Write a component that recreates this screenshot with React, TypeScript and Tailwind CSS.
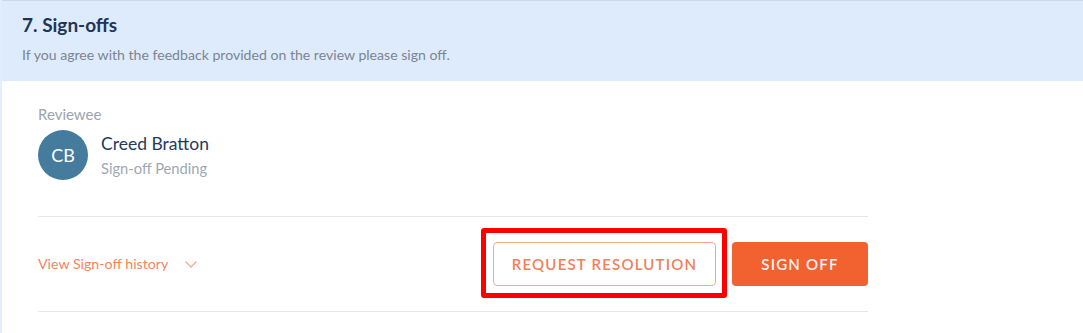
import React from 'react'

const Chevron = () => (
    <svg width="12" height="7" viewBox="0 0 12 7" fill="none" className="ml-[17px] mt-[1px]">
        <path d="M1 1l5 5 5-5" stroke="#f6a88c" strokeWidth="1.2" strokeLinecap="round" strokeLinejoin="round" />
    </svg>
)

const App = () => {
    return (
        <div className="w-[1083px] h-[333px] bg-white font-['Lato',sans-serif] border-l-2 border-[#e3edfb] overflow-hidden">
            <div className="h-[81px] bg-[#deebfc] border-t border-[#c9d9ee] pl-[20px] pt-[12px]">
                <h2 className="text-[19px] leading-[24px] font-bold text-[#1e3558]">7. Sign-offs</h2>
                <p className="mt-[8px] text-[14.1px] leading-[20px] text-[#7b8591]">
                    If you agree with the feedback provided on the review please sign off.
                </p>
            </div>
            <div className="pl-[36px] pt-[23px] w-[866px]">
                <div className="text-[15px] leading-[20px] text-[#9ba4b0]">Reviewee</div>
                <div className="mt-[6px] flex items-center gap-[13px]">
                    <div className="w-[50px] h-[50px] rounded-full bg-[#457b9c] flex items-center justify-center text-white text-[18px]">
                        CB
                    </div>
                    <div className="flex flex-col gap-[3px]">
                        <div className="text-[17.5px] leading-[22px] text-[#243a5c]">Creed Bratton</div>
                        <div className="text-[14.7px] leading-[20px] text-[#a0a8b3]">Sign-off Pending</div>
                    </div>
                </div>
                <div className="mt-[36px] border-t border-[#e6e7ea] border-b h-[96px] flex items-center justify-between">
                    <button className="flex items-center text-[14.2px] text-[#f4845f]">
                        View Sign-off history
                        <Chevron />
                    </button>
                    <div className="flex items-center gap-[16px]">
                        <div className="relative">
                            <button className="w-[223px] h-[44px] rounded-[4px] border border-[#f8a98a] text-[#f0805a] text-[15px] font-semibold tracking-[1.2px] bg-white">
                                REQUEST RESOLUTION
                            </button>
                            <span className="absolute left-[-12px] right-[-11px] top-[-14px] bottom-[-12px] border-[5px] border-[#ff0000] rounded-[3px] pointer-events-none" />
                        </div>
                        <button className="w-[136px] h-[44px] rounded-[4px] bg-[#f26130] text-[#fff4ef] text-[15px] font-semibold tracking-[1.2px]">
                            SIGN OFF
                        </button>
                    </div>
                </div>
            </div>
        </div>
    )
}

export default App
